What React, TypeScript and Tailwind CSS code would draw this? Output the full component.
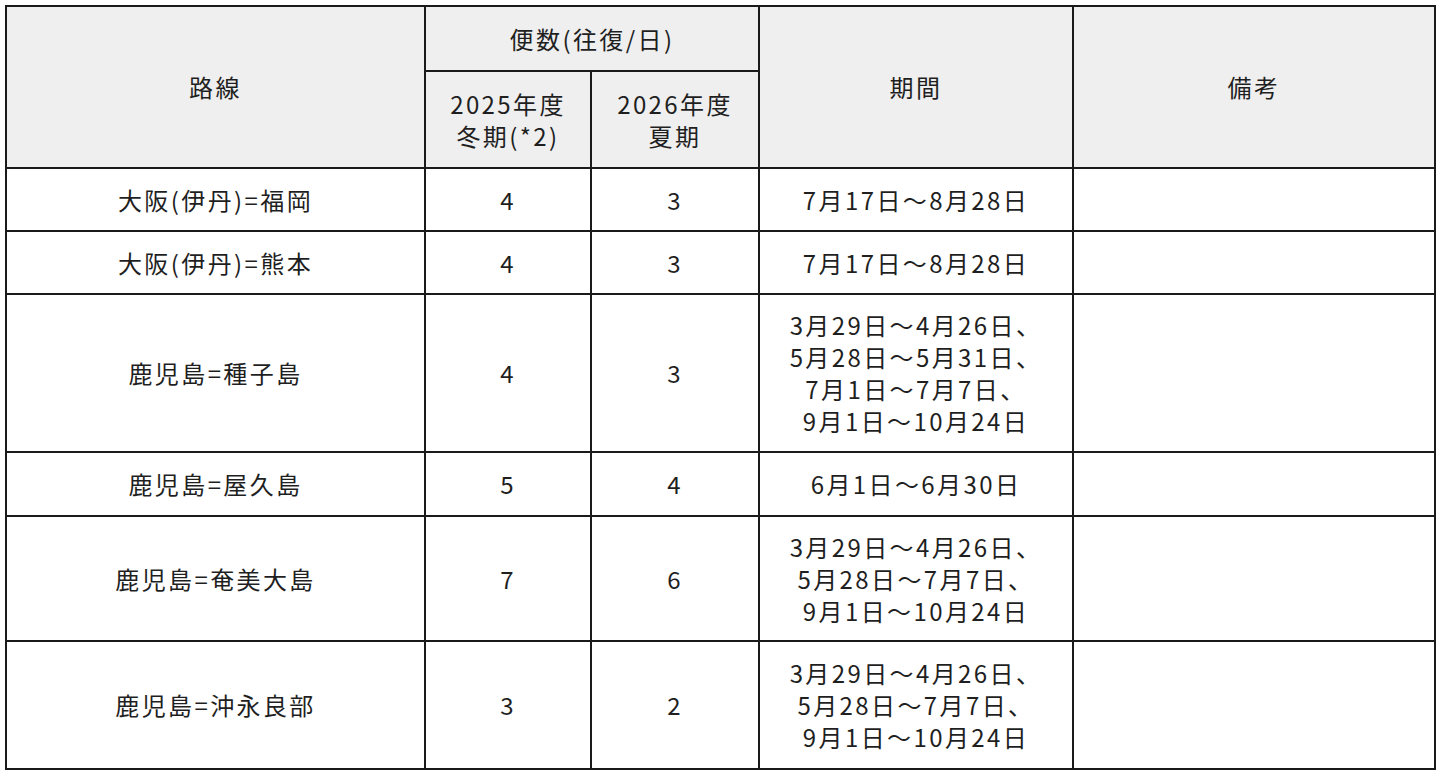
import React from "react";

interface Route {
  name: string;
  winter: string;
  summer: string;
  periods: string[];
  height: string;
}

const routes: Route[] = [
  { name: "大阪(伊丹)=福岡", winter: "4", summer: "3", periods: ["7月17日～8月28日"], height: "h-[63px]" },
  { name: "大阪(伊丹)=熊本", winter: "4", summer: "3", periods: ["7月17日～8月28日"], height: "h-[63px]" },
  {
    name: "鹿児島=種子島",
    winter: "4",
    summer: "3",
    periods: ["3月29日～4月26日、", "5月28日～5月31日、", "7月1日～7月7日、", "9月1日～10月24日"],
    height: "h-[158px]",
  },
  { name: "鹿児島=屋久島", winter: "5", summer: "4", periods: ["6月1日～6月30日"], height: "h-[64px]" },
  {
    name: "鹿児島=奄美大島",
    winter: "7",
    summer: "6",
    periods: ["3月29日～4月26日、", "5月28日～7月7日、", "9月1日～10月24日"],
    height: "h-[125px]",
  },
  {
    name: "鹿児島=沖永良部",
    winter: "3",
    summer: "2",
    periods: ["3月29日～4月26日、", "5月28日～7月7日、", "9月1日～10月24日"],
    height: "h-[128px]",
  },
];

const cell = "border-2 border-[#1a1a1a] text-center align-middle p-0";
const head = `${cell} bg-[#efefef] font-normal`;

export default function App() {
  return (
    <div className="bg-white min-h-screen pt-[5px] pl-[5px] font-['Noto_Sans_CJK_JP','Noto_Sans',sans-serif] text-[#1f1f1f] text-[24px] leading-[32px] tracking-[0.1em]">
      <table className="border-collapse table-fixed w-[1431px]">
        <colgroup>
          <col className="w-[419px]" />
          <col className="w-[166px]" />
          <col className="w-[168px]" />
          <col className="w-[314px]" />
          <col className="w-[362px]" />
        </colgroup>
        <thead>
          <tr className="h-[65px]">
            <th rowSpan={2} className={head}>路線</th>
            <th colSpan={2} className={head}>便数(往復/日)</th>
            <th rowSpan={2} className={head}>期間</th>
            <th rowSpan={2} className={head}>備考</th>
          </tr>
          <tr className="h-[97px]">
            <th className={head}>
              2025年度
              <br />
              冬期(*2)
            </th>
            <th className={head}>
              2026年度
              <br />
              夏期
            </th>
          </tr>
        </thead>
        <tbody>
          {routes.map((r) => (
            <tr key={r.name} className={r.height}>
              <td className={cell}>{r.name}</td>
              <td className={cell}>{r.winter}</td>
              <td className={cell}>{r.summer}</td>
              <td className={cell}>
                {r.periods.map((p) => (
                  <div key={p}>{p}</div>
                ))}
              </td>
              <td className={cell}></td>
            </tr>
          ))}
        </tbody>
      </table>
    </div>
  );
}
